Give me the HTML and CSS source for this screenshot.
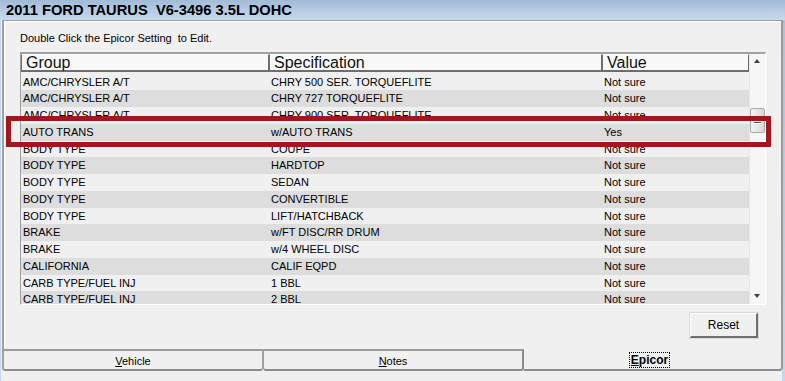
FILE: index.html
```html
<!DOCTYPE html>
<html>
<head>
<meta charset="utf-8">
<link rel="stylesheet" href="styles.css">
</head>
<body>
<div class="titlebar">2011 FORD TAURUS  V6-3496 3.5L DOHC</div>
<div class="window">
  <div class="tabctl">
    <div class="panel">
      <div class="caption">Double Click the Epicor Setting  to Edit.</div>
      <div class="list">
        <div class="listmain">
          <div class="hdr">
            <div class="hc c1">Group</div>
            <div class="hc c2">Specification</div>
            <div class="hc c3">Value</div>
          </div>
          <div class="rows">
            <div class="row"><span class="c1">AMC/CHRYSLER A/T</span><span class="c2">CHRY 500 SER. TORQUEFLITE</span><span class="c3">Not sure</span></div>
            <div class="row alt"><span class="c1">AMC/CHRYSLER A/T</span><span class="c2">CHRY 727 TORQUEFLITE</span><span class="c3">Not sure</span></div>
            <div class="row"><span class="c1">AMC/CHRYSLER A/T</span><span class="c2">CHRY 900 SER. TORQUEFLITE</span><span class="c3">Not sure</span></div>
            <div class="row alt"><span class="c1">AUTO TRANS</span><span class="c2">w/AUTO TRANS</span><span class="c3">Yes</span></div>
            <div class="row"><span class="c1">BODY TYPE</span><span class="c2">COUPE</span><span class="c3">Not sure</span></div>
            <div class="row alt"><span class="c1">BODY TYPE</span><span class="c2">HARDTOP</span><span class="c3">Not sure</span></div>
            <div class="row"><span class="c1">BODY TYPE</span><span class="c2">SEDAN</span><span class="c3">Not sure</span></div>
            <div class="row alt"><span class="c1">BODY TYPE</span><span class="c2">CONVERTIBLE</span><span class="c3">Not sure</span></div>
            <div class="row"><span class="c1">BODY TYPE</span><span class="c2">LIFT/HATCHBACK</span><span class="c3">Not sure</span></div>
            <div class="row alt"><span class="c1">BRAKE</span><span class="c2">w/FT DISC/RR DRUM</span><span class="c3">Not sure</span></div>
            <div class="row"><span class="c1">BRAKE</span><span class="c2">w/4 WHEEL DISC</span><span class="c3">Not sure</span></div>
            <div class="row alt"><span class="c1">CALIFORNIA</span><span class="c2">CALIF EQPD</span><span class="c3">Not sure</span></div>
            <div class="row"><span class="c1">CARB TYPE/FUEL INJ</span><span class="c2">1 BBL</span><span class="c3">Not sure</span></div>
            <div class="row alt"><span class="c1">CARB TYPE/FUEL INJ</span><span class="c2">2 BBL</span><span class="c3">Not sure</span></div>
          </div>
        </div>
        <div class="scrollbar">
          <div class="arrow up"></div>
          <div class="thumb"><i></i><i></i></div>
          <div class="arrow down"></div>
        </div>
      </div>
      <div class="btnrow"><div class="btn">Reset</div></div>
    </div>
    <div class="tabs">
      <div class="tab t1"><span><u>V</u>ehicle</span></div>
      <div class="tab t2"><span><u>N</u>otes</span></div>
      <div class="tab t3"><span class="focus"><u>E</u>picor</span></div>
    </div>
  </div>
</div>
<div class="highlight"></div>
</body>
</html>
```

FILE: styles.css
```css
* { box-sizing: border-box; }
html, body { margin: 0; padding: 0; }
body {
  width: 785px;
  height: 381px;
  overflow: hidden;
  background: linear-gradient(#a9c2dc, #c3d8ee);
  font-family: "Liberation Sans", Arial, sans-serif;
  font-size: 11px;
  color: #000;
  position: relative;
}
.titlebar {
  height: 20px;
  padding-left: 6px;
  line-height: 21px;
  font-size: 14.7px;
  font-weight: bold;
  white-space: pre;
  background: linear-gradient(#a2bbd6, #c6daef);
}
.window {
  height: 361px;
  background: #f0f0f0;
  margin-right: 3px;
  padding-left: 1px;
  border-left: 1px solid #c3d8ee;
}
.tabctl {
  width: 781px;
  display: flex;
  flex-direction: column;
}
.panel {
  height: 329px;
  border: 1px solid #a0a0a0;
  border-bottom: none;
  border-right: 2px solid #9a9a9a;
  border-left: 2px solid #a0a0a0;
  box-shadow: inset 1px 1px 0 #fff;
  display: flex;
  flex-direction: column;
  padding-left: 16px;
}
.caption {
  white-space: pre;
  margin-top: 11px;
  line-height: 13px;
  height: 13px;
}
.list {
  margin-top: 7px;
  width: 746px;
  height: 253px;
  display: flex;
  border-top: 2px solid #a0a0a0;
  border-left: 1px solid #a0a0a0;
  border-right: 1px solid #fff;
  border-bottom: 1px solid #fff;
  overflow: hidden;
}
.listmain {
  width: 728px;
  display: flex;
  flex-direction: column;
  overflow: hidden;
}
.hdr {
  display: flex;
  height: 18px;
  flex: none;
}
.hc {
  font-size: 16px;
  line-height: 16px;
  padding-left: 4px;
  background: #f8f8f8;
  border-left: 1px solid #6d6d6d;
  border-right: 1px solid #6d6d6d;
  border-bottom: 2px solid #6d6d6d;
  border-top: 1px solid #fff;
  color: #111;
}
.hdr .c1 { width: 248px; }
.hdr .c2 { width: 333px; }
.hdr .c3 { width: 147px; }
.rows { padding-top: 1.6px; }
.row {
  display: flex;
  height: 16.75px;
  line-height: 16.75px;
  background: #f0f0f0;
  white-space: nowrap;
}
.row.alt { background: #dddddd; }
.row span { padding-left: 2px; overflow: hidden; }
.row .c1 { width: 248px; }
.row .c2 { width: 333px; }
.row .c3 { width: 147px; }
.scrollbar {
  width: 16px;
  background: #f6f6f6;
  border-left: 1px solid #e6e6e6;
  display: flex;
  flex-direction: column;
  align-items: center;
}
.arrow { width: 15px; height: 16px; position: relative; flex: none; }
.arrow::after {
  content: "";
  position: absolute;
  left: 4px;
  border-left: 3.5px solid transparent;
  border-right: 3.5px solid transparent;
}
.arrow.up::after { top: 5px; border-bottom: 4px solid #404040; }
.arrow.down { margin-top: auto; }
.arrow.down::after { top: 6px; border-top: 4px solid #404040; }
.thumb {
  margin-top: 38px;
  width: 15px;
  height: 25px;
  border: 1px solid #a8a8a8;
  border-radius: 2px;
  background: linear-gradient(90deg, #f2f2f2, #e4e4e4 60%, #d6d6d6);
  display: flex;
  flex-direction: column;
  align-items: center;
  justify-content: center;
  gap: 2px;
}
.thumb i {
  display: block;
  width: 7px;
  height: 2px;
  border-top: 1px solid #555;
  border-bottom: 1px solid #fff;
}
.btnrow {
  display: flex;
  justify-content: flex-end;
  padding-right: 23px;
  margin-top: 8px;
}
.btn {
  width: 68px;
  height: 25px;
  line-height: 22px;
  text-align: center;
  font-size: 12px;
  background: #f0f0f0;
  border-top: 1px solid #fff;
  border-left: 1px solid #fff;
  border-right: 2px solid #707070;
  border-bottom: 2px solid #707070;
  box-shadow: 0 0 0 1px #d8d8d8;
}
.tabs {
  display: flex;
  height: 22px;
}
.tab {
  height: 22px;
  display: flex;
  align-items: center;
  justify-content: center;
  font-size: 11px;
}
.t1 {
  width: 261px;
  border-top: 2px solid #9a9a9a;
  border-left: 2px solid #a0a0a0;
  border-right: 1px solid #a0a0a0;
  border-bottom: 2px solid #8c8c8c;
  border-radius: 0 0 3px 3px;
  padding-top: 1px;
}
.t2 {
  width: 261px;
  border-top: 2px solid #9a9a9a;
  border-left: 1px solid #a0a0a0;
  border-right: 2px solid #8c8c8c;
  border-bottom: 2px solid #8c8c8c;
  border-radius: 0 0 3px 3px;
  padding-top: 1px;
}
.t3 {
  flex: 1;
  border-right: 2px solid #9a9a9a;
  border-bottom: 2px solid #8c8c8c;
  border-radius: 0 0 4px 0;
  font-weight: bold;
  font-size: 12px;
  padding-right: 6px;
  padding-top: 2px;
}
.focus {
  outline: 1px dotted #000;
  outline-offset: 0;
  padding: 0 1px;
  line-height: 14px;
}
.highlight {
  position: absolute;
  left: 6px;
  top: 116px;
  width: 765px;
  height: 31px;
  border: 5px solid #a3161e;
}
```
